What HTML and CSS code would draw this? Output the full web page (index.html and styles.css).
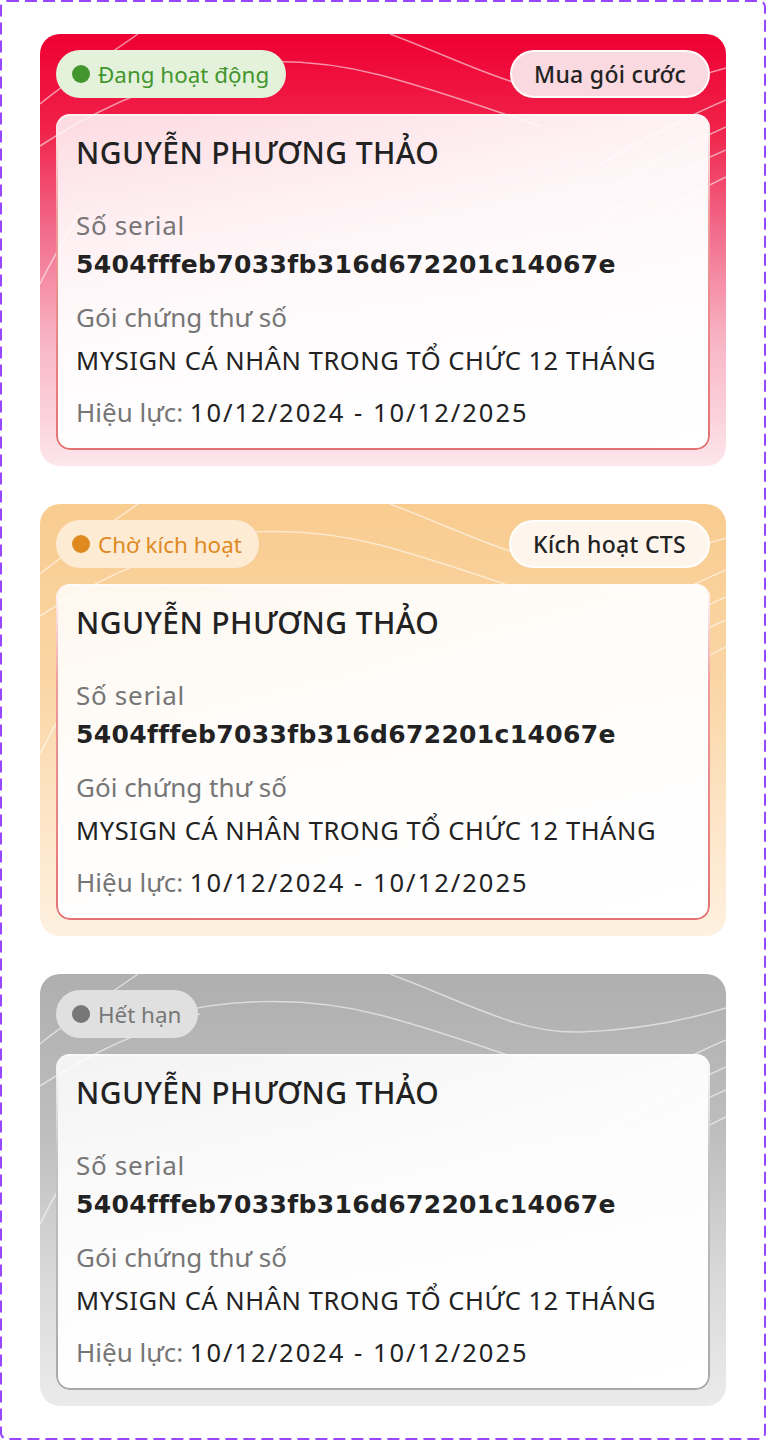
FILE: index.html
```html
<!DOCTYPE html>
<html lang="vi">
  <head>
    <meta charset="UTF-8" />
    <meta name="viewport" content="width=device-width, initial-scale=1.0" />
    <title>Chứng thư số</title>
    <link rel="stylesheet" href="styles.css">
  </head>
  <body>
    <div class="frame">
      <svg class="frame-border" width="766" height="1440" viewBox="0 0 766 1440">
        <rect x="1" y="1" width="764" height="1438" rx="6" ry="6" />
      </svg>

      <!-- Active -->
      <div class="cert cert-active">
        <svg class="waves" viewBox="0 0 686 432" preserveAspectRatio="none">
          <path d="M98,0 C70,20 30,45 0,70" />
          <path d="M160,40 Q80,60 0,112" />
          <path d="M40,180 Q20,210 0,250" />
          <path d="M350,0 C430,30 480,60 540,58 C600,56 650,45 686,34" />
          <path d="M120,42 C180,26 260,20 340,41 C400,57 440,72 500,92" />
          <path d="M560,130 Q630,90 686,66" />
          <path d="M560,160 Q630,118 686,93" />
          <path d="M560,185 Q630,140 686,116" />
          <path d="M560,215 Q630,170 686,143" />
        </svg>
        <div class="cert-top">
          <span class="status"><span class="dot"></span>Đang hoạt động</span>
          <button class="action">Mua gói cước</button>
        </div>
        <div class="info">
          <div class="owner">NGUYỄN PHƯƠNG THẢO</div>
          <div class="fields">
            <div class="field">
              <div class="label serial-label">Số serial</div>
              <div class="value serial">5404fffeb7033fb316d672201c14067e</div>
            </div>
            <div class="field">
              <div class="label">Gói chứng thư số</div>
              <div class="value package">MYSIGN CÁ NHÂN TRONG TỔ CHỨC 12 THÁNG</div>
            </div>
            <div class="value validity"><span class="label">Hiệu lực:</span> <span class="dates">10/12/2024 - 10/12/2025</span></div>
          </div>
        </div>
      </div>

      <!-- Pending -->
      <div class="cert cert-pending">
        <svg class="waves" viewBox="0 0 686 432" preserveAspectRatio="none">
          <path d="M98,0 C70,20 30,45 0,70" />
          <path d="M160,40 Q80,60 0,112" />
          <path d="M40,180 Q20,210 0,250" />
          <path d="M350,0 C430,30 480,60 540,58 C600,56 650,45 686,34" />
          <path d="M120,42 C180,26 260,20 340,41 C400,57 440,72 500,92" />
          <path d="M560,130 Q630,90 686,66" />
          <path d="M560,160 Q630,118 686,93" />
          <path d="M560,185 Q630,140 686,116" />
          <path d="M560,215 Q630,170 686,143" />
        </svg>
        <div class="cert-top">
          <span class="status"><span class="dot"></span>Chờ kích hoạt</span>
          <button class="action">Kích hoạt CTS</button>
        </div>
        <div class="info">
          <div class="owner">NGUYỄN PHƯƠNG THẢO</div>
          <div class="fields">
            <div class="field">
              <div class="label serial-label">Số serial</div>
              <div class="value serial">5404fffeb7033fb316d672201c14067e</div>
            </div>
            <div class="field">
              <div class="label">Gói chứng thư số</div>
              <div class="value package">MYSIGN CÁ NHÂN TRONG TỔ CHỨC 12 THÁNG</div>
            </div>
            <div class="value validity"><span class="label">Hiệu lực:</span> <span class="dates">10/12/2024 - 10/12/2025</span></div>
          </div>
        </div>
      </div>

      <!-- Expired -->
      <div class="cert cert-expired">
        <svg class="waves" viewBox="0 0 686 432" preserveAspectRatio="none">
          <path d="M98,0 C70,20 30,45 0,70" />
          <path d="M160,40 Q80,60 0,112" />
          <path d="M40,180 Q20,210 0,250" />
          <path d="M350,0 C430,30 480,60 540,58 C600,56 650,45 686,34" />
          <path d="M120,42 C180,26 260,20 340,41 C400,57 440,72 500,92" />
          <path d="M560,130 Q630,90 686,66" />
          <path d="M560,160 Q630,118 686,93" />
          <path d="M560,185 Q630,140 686,116" />
          <path d="M560,215 Q630,170 686,143" />
        </svg>
        <div class="cert-top">
          <span class="status"><span class="dot"></span>Hết hạn</span>
        </div>
        <div class="info">
          <div class="owner">NGUYỄN PHƯƠNG THẢO</div>
          <div class="fields">
            <div class="field">
              <div class="label serial-label">Số serial</div>
              <div class="value serial">5404fffeb7033fb316d672201c14067e</div>
            </div>
            <div class="field">
              <div class="label">Gói chứng thư số</div>
              <div class="value package">MYSIGN CÁ NHÂN TRONG TỔ CHỨC 12 THÁNG</div>
            </div>
            <div class="value validity"><span class="label">Hiệu lực:</span> <span class="dates">10/12/2024 - 10/12/2025</span></div>
          </div>
        </div>
      </div>
    </div>
  </body>
</html>
```

FILE: styles.css
```css
* {
  box-sizing: border-box;
}

body {
  margin: 0;
  background: #ffffff;
  font-family: "Noto Sans", "Open Sans", sans-serif;
  color: #222222;
}

.frame {
  position: relative;
  width: 766px;
  height: 1440px;
  padding: 34px 40px;
  display: flex;
  flex-direction: column;
  gap: 38px;
}

.frame-border {
  position: absolute;
  top: 0;
  left: 0;
  pointer-events: none;
}

.frame-border rect {
  fill: none;
  stroke: #9747ff;
  stroke-width: 2;
  stroke-dasharray: 12 6;
}

.cert {
  position: relative;
  height: 432px;
  padding: 16px;
  border-radius: 20px;
  overflow: hidden;
  display: flex;
  flex-direction: column;
  gap: 16px;
}

.cert-active {
  background: linear-gradient(180deg, #ee0033 0%, #f0224a 22%, #f26a8a 45%, #f8b3c3 70%, #fde6ec 100%);
}

.cert-pending {
  background: linear-gradient(180deg, #f9cc90 0%, #fad5a4 40%, #fde6c9 75%, #fef1e0 100%);
}

.cert-expired {
  background: linear-gradient(180deg, #afafaf 0%, #bdbdbd 35%, #d9d9d9 70%, #ebebeb 100%);
}

.waves {
  position: absolute;
  top: 0;
  left: 0;
  width: 100%;
  height: 100%;
  z-index: 0;
}

.waves path {
  fill: none;
  stroke: rgba(255, 255, 255, 0.55);
  stroke-width: 1.5;
}

.cert-top {
  position: relative;
  z-index: 1;
  display: flex;
  justify-content: space-between;
  align-items: center;
  height: 48px;
}

.status {
  display: flex;
  align-items: center;
  gap: 8px;
  height: 48px;
  padding: 0 17px 0 16px;
  border-radius: 24px;
  font-size: 22.4px;
}

.dot {
  width: 18px;
  height: 18px;
  border-radius: 50%;
  background: currentColor;
}

.cert-active .status {
  background: #e4f2dc;
  color: #43962e;
}

.cert-pending .status {
  background: #fdebd4;
  color: #de8a1f;
}

.cert-expired .status {
  background: #e0e0e0;
  color: #777777;
}

.action {
  height: 48px;
  padding: 0 22px;
  border: 2px solid rgba(255, 255, 255, 0.9);
  border-radius: 24px;
  font-family: inherit;
  font-size: 23px;
  font-weight: 500;
  letter-spacing: 0.3px;
  color: #222222;
  cursor: pointer;
}

.cert-active .action {
  background: #fbd9e1;
}

.cert-pending .action {
  background: #fef6ed;
}

.info {
  position: relative;
  z-index: 1;
  height: 336px;
  padding: 19px 20px;
  border-radius: 14px;
  background: linear-gradient(160deg, rgba(255, 255, 255, 0.84) 0%, rgba(255, 255, 255, 0.95) 45%, #ffffff 100%);
}

.info::before {
  content: "";
  position: absolute;
  top: 0;
  left: 0;
  right: 0;
  bottom: 0;
  padding: 2px;
  border-radius: inherit;
  -webkit-mask: linear-gradient(#000 0 0) content-box, linear-gradient(#000 0 0);
  -webkit-mask-composite: xor;
  mask-composite: exclude;
  pointer-events: none;
}

.cert-active .info::before,
.cert-pending .info::before {
  background: linear-gradient(180deg, rgba(255, 255, 255, 0.6) 0%, #f09a9a 30%, #e57272 100%);
}

.cert-expired .info::before {
  background: linear-gradient(180deg, rgba(255, 255, 255, 0.6) 0%, #c4c4c4 30%, #a8a8a8 100%);
}

.owner {
  font-size: 30px;
  font-weight: 500;
  letter-spacing: 0.4px;
  line-height: 40px;
  margin-bottom: 32px;
}

.fields {
  display: flex;
  flex-direction: column;
  gap: 12px;
}

.label {
  font-size: 26px;
  line-height: 40px;
  color: #767676;
}

.serial-label {
  letter-spacing: 0.7px;
}

.value {
  font-size: 25.5px;
  line-height: 40px;
  color: #222222;
}

.serial {
  font-family: "DejaVu Sans", "Noto Sans", sans-serif;
  font-size: 25px;
  font-weight: 700;
  letter-spacing: 0.35px;
}

.package {
  margin-top: 3px;
  letter-spacing: 0.55px;
}

.validity .label {
  font-size: 26px;
}

.dates {
  letter-spacing: 2px;
}
```
